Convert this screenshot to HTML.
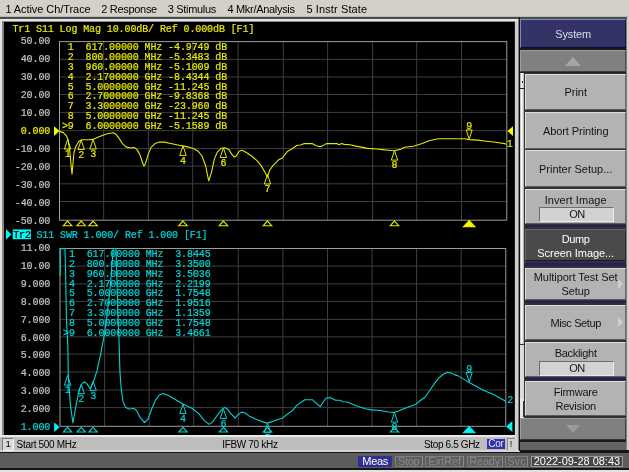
<!DOCTYPE html>
<html><head><meta charset="utf-8"><title>E5071C</title>
<style>
*{margin:0;padding:0;box-sizing:border-box}
html,body{width:629px;height:472px;overflow:hidden;background:#d4d0c8;font-family:"Liberation Sans",sans-serif}
#root{position:relative;width:629px;height:472px;overflow:hidden;background:#d4d0c8;will-change:transform;transform:translateZ(0)}
.abs{position:absolute}
#menu{left:0;top:0;width:629px;height:17px;background:#d4d0c8;font-size:11px;color:#000;white-space:pre}
#menu span{position:absolute;top:2.8px;line-height:13px;letter-spacing:-0.05px}
.k{position:absolute;left:525px;width:101.4px;background:#b3b3b3;border-top:1px solid #dcdcdc;border-left:1px solid #dcdcdc;border-right:1px solid #6a6a6a;border-bottom:1px solid #5a5a5a;font-size:11px;color:#141414;text-align:center;line-height:13px}
.k.dk{background:#4a4a4a;color:#fff;border-color:#6a6a6a #2a2a2a #1a1a1a #6a6a6a}
.k b{font-weight:normal}
.k .one{position:absolute;left:0;right:0;top:50%;margin-top:-5.6px}
.k .two{position:absolute;left:0;right:0;top:50%;margin-top:-13.6px;line-height:14.3px}
.k .t1{position:absolute;left:0;right:0;top:4.2px}
.k .on{position:absolute;left:13.4px;width:75px;height:15px;background:#d2d2d2;border-top:1px solid #6c6c6c;border-left:1px solid #6c6c6c;border-right:1px solid #eaeaea;border-bottom:1px solid #eaeaea;line-height:13.4px;font-size:11px}
.ar{position:absolute;right:2.4px;top:50%;margin-top:-5px;width:0;height:0;border-left:5.4px solid #cfcfcf;border-top:5px solid transparent;border-bottom:5px solid transparent}
.bl{position:absolute;left:525px;width:101.4px;height:2.2px;background:#20205e}
.sb{position:absolute;top:455.6px;height:11.8px;border:1px solid #7e7e7e;border-right-color:#8a8a8a;color:#898989;font-size:11px;line-height:9.4px;text-align:center;background:#5e5e5e;white-space:pre}
</style></head><body><div id="root">
<!-- menu bar -->
<div id="menu" class="abs"><span style="left:5.4px;letter-spacing:-0.07px">1 Active Ch/Trace</span><span style="left:101.2px;letter-spacing:-0.3px">2 Response</span><span style="left:167.8px;letter-spacing:-0.33px">3 Stimulus</span><span style="left:227.4px;letter-spacing:-0.3px">4 Mkr/Analysis</span><span style="left:306.4px;letter-spacing:0.12px">5 Instr State</span></div>
<div class="abs" style="left:0;top:16.4px;width:629px;height:1px;background:#bdbab2"></div>
<div class="abs" style="left:0;top:17.2px;width:629px;height:1.6px;background:#4c4c4c"></div>
<!-- display frame -->
<div class="abs" style="left:0;top:18.8px;width:518.6px;height:418px;background:#e6e6e6"></div>
<div class="abs" style="left:2px;top:20.6px;width:515.2px;height:416px;background:#858585"></div>
<div class="abs" style="left:514.8px;top:20.6px;width:2.8px;height:430px;background:#d0d0d0"></div>
<div class="abs" style="left:517.6px;top:19px;width:1.4px;height:432px;background:#7c7c7c"></div>
<div class="abs" style="left:518.9px;top:17.2px;width:1.1px;height:434px;background:#111"></div>
<svg width="629" height="472" viewBox="0 0 629 472" style="position:absolute;left:0;top:0">
<rect x="4" y="22" width="510.8" height="413.3" fill="#000"/>
<line x1="103.7" y1="41.6" x2="103.7" y2="220.2" stroke="#3e3e3e" stroke-width="1"/>
<line x1="148.4" y1="41.6" x2="148.4" y2="220.2" stroke="#3e3e3e" stroke-width="1"/>
<line x1="192.7" y1="41.6" x2="192.7" y2="220.2" stroke="#3e3e3e" stroke-width="1"/>
<line x1="238.0" y1="41.6" x2="238.0" y2="220.2" stroke="#3e3e3e" stroke-width="1"/>
<line x1="283.3" y1="41.6" x2="283.3" y2="220.2" stroke="#3e3e3e" stroke-width="1"/>
<line x1="327.6" y1="41.6" x2="327.6" y2="220.2" stroke="#3e3e3e" stroke-width="1"/>
<line x1="372.6" y1="41.6" x2="372.6" y2="220.2" stroke="#3e3e3e" stroke-width="1"/>
<line x1="416.7" y1="41.6" x2="416.7" y2="220.2" stroke="#3e3e3e" stroke-width="1"/>
<line x1="461.5" y1="41.6" x2="461.5" y2="220.2" stroke="#3e3e3e" stroke-width="1"/>
<line x1="59.5" y1="59.4" x2="506.8" y2="59.4" stroke="#3e3e3e" stroke-width="1"/>
<line x1="59.5" y1="77.0" x2="506.8" y2="77.0" stroke="#3e3e3e" stroke-width="1"/>
<line x1="59.5" y1="94.5" x2="506.8" y2="94.5" stroke="#3e3e3e" stroke-width="1"/>
<line x1="59.5" y1="112.4" x2="506.8" y2="112.4" stroke="#3e3e3e" stroke-width="1"/>
<line x1="59.5" y1="130.7" x2="506.8" y2="130.7" stroke="#3e3e3e" stroke-width="1"/>
<line x1="59.5" y1="148.5" x2="506.8" y2="148.5" stroke="#3e3e3e" stroke-width="1"/>
<line x1="59.5" y1="166.1" x2="506.8" y2="166.1" stroke="#3e3e3e" stroke-width="1"/>
<line x1="59.5" y1="183.8" x2="506.8" y2="183.8" stroke="#3e3e3e" stroke-width="1"/>
<line x1="59.5" y1="201.5" x2="506.8" y2="201.5" stroke="#3e3e3e" stroke-width="1"/>
<rect x="59.5" y="41.6" width="447.3" height="178.6" fill="none" stroke="#9c9c9c" stroke-width="1"/>
<text x="12.4" y="31.7" fill="#e6e600" stroke="#e6e600" stroke-width="0.22" text-anchor="start" style="font-family:'Liberation Mono',monospace;font-size:10.0px;letter-spacing:-0.101px;white-space:pre;">Tr1 S11 Log Mag 10.00dB/ Ref 0.000dB [F1]</text>
<text x="50.2" y="44.3" fill="#c0c0c0" stroke="#c0c0c0" stroke-width="0.22" text-anchor="end" style="font-family:'Liberation Mono',monospace;font-size:10.0px;letter-spacing:-0.101px;white-space:pre;">50.00</text>
<text x="50.2" y="62.2" fill="#c0c0c0" stroke="#c0c0c0" stroke-width="0.22" text-anchor="end" style="font-family:'Liberation Mono',monospace;font-size:10.0px;letter-spacing:-0.101px;white-space:pre;">40.00</text>
<text x="50.2" y="80.2" fill="#c0c0c0" stroke="#c0c0c0" stroke-width="0.22" text-anchor="end" style="font-family:'Liberation Mono',monospace;font-size:10.0px;letter-spacing:-0.101px;white-space:pre;">30.00</text>
<text x="50.2" y="98.1" fill="#c0c0c0" stroke="#c0c0c0" stroke-width="0.22" text-anchor="end" style="font-family:'Liberation Mono',monospace;font-size:10.0px;letter-spacing:-0.101px;white-space:pre;">20.00</text>
<text x="50.2" y="116.1" fill="#c0c0c0" stroke="#c0c0c0" stroke-width="0.22" text-anchor="end" style="font-family:'Liberation Mono',monospace;font-size:10.0px;letter-spacing:-0.101px;white-space:pre;">10.00</text>
<text x="50.2" y="134.1" fill="#e6e600" stroke="#e6e600" stroke-width="0.22" text-anchor="end" style="font-family:'Liberation Mono',monospace;font-size:10.0px;letter-spacing:-0.101px;white-space:pre;">0.000</text>
<text x="50.2" y="152.0" fill="#c0c0c0" stroke="#c0c0c0" stroke-width="0.22" text-anchor="end" style="font-family:'Liberation Mono',monospace;font-size:10.0px;letter-spacing:-0.101px;white-space:pre;">-10.00</text>
<text x="50.2" y="169.9" fill="#c0c0c0" stroke="#c0c0c0" stroke-width="0.22" text-anchor="end" style="font-family:'Liberation Mono',monospace;font-size:10.0px;letter-spacing:-0.101px;white-space:pre;">-20.00</text>
<text x="50.2" y="187.9" fill="#c0c0c0" stroke="#c0c0c0" stroke-width="0.22" text-anchor="end" style="font-family:'Liberation Mono',monospace;font-size:10.0px;letter-spacing:-0.101px;white-space:pre;">-30.00</text>
<text x="50.2" y="205.8" fill="#c0c0c0" stroke="#c0c0c0" stroke-width="0.22" text-anchor="end" style="font-family:'Liberation Mono',monospace;font-size:10.0px;letter-spacing:-0.101px;white-space:pre;">-40.00</text>
<text x="50.2" y="223.8" fill="#c0c0c0" stroke="#c0c0c0" stroke-width="0.22" text-anchor="end" style="font-family:'Liberation Mono',monospace;font-size:10.0px;letter-spacing:-0.101px;white-space:pre;">-50.00</text>
<text x="61.9" y="50.2" fill="#e6e600" stroke="#e6e600" stroke-width="0.22" text-anchor="start" style="font-family:'Liberation Mono',monospace;font-size:10.0px;letter-spacing:-0.101px;white-space:pre;"> 1  617.00000 MHz -4.9749 dB</text>
<text x="61.9" y="60.0" fill="#e6e600" stroke="#e6e600" stroke-width="0.22" text-anchor="start" style="font-family:'Liberation Mono',monospace;font-size:10.0px;letter-spacing:-0.101px;white-space:pre;"> 2  800.00000 MHz -5.3483 dB</text>
<text x="61.9" y="69.8" fill="#e6e600" stroke="#e6e600" stroke-width="0.22" text-anchor="start" style="font-family:'Liberation Mono',monospace;font-size:10.0px;letter-spacing:-0.101px;white-space:pre;"> 3  960.00000 MHz -5.1009 dB</text>
<text x="61.9" y="79.7" fill="#e6e600" stroke="#e6e600" stroke-width="0.22" text-anchor="start" style="font-family:'Liberation Mono',monospace;font-size:10.0px;letter-spacing:-0.101px;white-space:pre;"> 4  2.1700000 GHz -8.4344 dB</text>
<text x="61.9" y="89.5" fill="#e6e600" stroke="#e6e600" stroke-width="0.22" text-anchor="start" style="font-family:'Liberation Mono',monospace;font-size:10.0px;letter-spacing:-0.101px;white-space:pre;"> 5  5.0000000 GHz -11.245 dB</text>
<text x="61.9" y="99.3" fill="#e6e600" stroke="#e6e600" stroke-width="0.22" text-anchor="start" style="font-family:'Liberation Mono',monospace;font-size:10.0px;letter-spacing:-0.101px;white-space:pre;"> 6  2.7000000 GHz -9.8368 dB</text>
<text x="61.9" y="109.1" fill="#e6e600" stroke="#e6e600" stroke-width="0.22" text-anchor="start" style="font-family:'Liberation Mono',monospace;font-size:10.0px;letter-spacing:-0.101px;white-space:pre;"> 7  3.3000000 GHz -23.960 dB</text>
<text x="61.9" y="118.9" fill="#e6e600" stroke="#e6e600" stroke-width="0.22" text-anchor="start" style="font-family:'Liberation Mono',monospace;font-size:10.0px;letter-spacing:-0.101px;white-space:pre;"> 8  5.0000000 GHz -11.245 dB</text>
<text x="61.9" y="128.8" fill="#e6e600" stroke="#e6e600" stroke-width="0.22" text-anchor="start" style="font-family:'Liberation Mono',monospace;font-size:10.0px;letter-spacing:-0.101px;white-space:pre;">&gt;9  6.0000000 GHz -5.1589 dB</text>
<polyline points="59.5,131.4 63.4,132.6 66.2,135.6 68.1,139.8 70.0,153.2 71.0,164.6 72.0,174.2 72.9,164.6 73.9,153.2 75.8,146.5 78.6,141.7 81.5,139.8 88.2,139.8 93.0,139.4 99.6,136.4 107.3,133.7 113.0,132.7 115.8,134.1 118.7,137.9 122.5,143.6 126.3,147.1 131.1,148.0 134.0,147.4 136.8,149.4 139.7,154.1 142.6,162.7 143.9,166.1 145.4,163.7 148.3,154.1 151.1,147.4 155.0,143.6 159.7,142.1 164.5,142.1 169.5,143.2 179.1,145.2 182.9,145.9 188.6,147.1 194.4,149.0 198.2,151.3 202.0,156.0 205.8,166.5 208.7,180.8 211.5,172.3 214.4,158.9 217.3,152.2 221.1,148.4 224.9,147.8 228.7,149.4 231.6,154.1 234.4,157.0 236.3,156.0 239.2,151.3 242.1,150.3 245.9,152.2 251.6,156.0 257.3,160.8 261.1,165.6 265.0,172.3 267.3,177.0 269.7,170.3 272.9,165.6 278.6,159.8 282.4,157.9 287.2,151.6 291.9,149.0 296.7,145.5 300.5,145.0 304.4,143.6 312.0,143.6 315.8,145.5 319.6,146.7 322.5,145.9 326.3,143.6 336.8,143.6 339.1,144.8 341.6,143.6 344.4,144.4 350.2,144.8 355.9,146.1 361.6,147.1 367.3,148.4 376.9,149.0 384.5,149.9 388.9,150.3 394.5,150.7 400.0,149.4 404.5,147.2 413.4,146.3 422.3,143.4 429.0,140.7 437.9,138.7 446.8,138.7 464.6,138.7 469.0,139.6 477.9,140.1 486.8,141.2 495.7,142.3 504.6,143.6 506.8,144.4" fill="none" stroke="#e6e600" stroke-width="1.1" stroke-linejoin="round"/>
<path d="M67.6 139.6 L64.4 149.1 L70.8 149.1 Z" fill="none" stroke="#e6e600" stroke-width="1"/><text x="67.6" y="157.3" fill="#e6e600" stroke="#e6e600" stroke-width="0.22" text-anchor="middle" style="font-family:'Liberation Mono',monospace;font-size:10.0px;letter-spacing:-0.101px;white-space:pre;">1</text>
<path d="M81.2 140.0 L78.0 149.5 L84.4 149.5 Z" fill="none" stroke="#e6e600" stroke-width="1"/><text x="81.2" y="157.7" fill="#e6e600" stroke="#e6e600" stroke-width="0.22" text-anchor="middle" style="font-family:'Liberation Mono',monospace;font-size:10.0px;letter-spacing:-0.101px;white-space:pre;">2</text>
<path d="M93.1 139.5 L89.9 149.0 L96.3 149.0 Z" fill="none" stroke="#e6e600" stroke-width="1"/><text x="93.1" y="157.2" fill="#e6e600" stroke="#e6e600" stroke-width="0.22" text-anchor="middle" style="font-family:'Liberation Mono',monospace;font-size:10.0px;letter-spacing:-0.101px;white-space:pre;">3</text>
<path d="M183.0 145.9 L179.8 155.4 L186.2 155.4 Z" fill="none" stroke="#e6e600" stroke-width="1"/><text x="183.0" y="163.6" fill="#e6e600" stroke="#e6e600" stroke-width="0.22" text-anchor="middle" style="font-family:'Liberation Mono',monospace;font-size:10.0px;letter-spacing:-0.101px;white-space:pre;">4</text>
<path d="M223.4 148.0 L220.2 157.5 L226.6 157.5 Z" fill="none" stroke="#e6e600" stroke-width="1"/><text x="223.4" y="165.7" fill="#e6e600" stroke="#e6e600" stroke-width="0.22" text-anchor="middle" style="font-family:'Liberation Mono',monospace;font-size:10.0px;letter-spacing:-0.101px;white-space:pre;">6</text>
<path d="M267.5 174.5 L264.3 184.0 L270.7 184.0 Z" fill="none" stroke="#e6e600" stroke-width="1"/><text x="267.5" y="192.2" fill="#e6e600" stroke="#e6e600" stroke-width="0.22" text-anchor="middle" style="font-family:'Liberation Mono',monospace;font-size:10.0px;letter-spacing:-0.101px;white-space:pre;">7</text>
<path d="M394.5 150.6 L391.3 160.1 L397.7 160.1 Z" fill="none" stroke="#e6e600" stroke-width="1"/><text x="394.5" y="168.3" fill="#e6e600" stroke="#e6e600" stroke-width="0.22" text-anchor="middle" style="font-family:'Liberation Mono',monospace;font-size:10.0px;letter-spacing:-0.101px;white-space:pre;">8</text>
<path d="M469.2 139.2 L466.2 129.9 L472.2 129.9 Z" fill="none" stroke="#e6e600" stroke-width="1"/><text x="469.2" y="129.0" fill="#e6e600" stroke="#e6e600" stroke-width="0.22" text-anchor="middle" style="font-family:'Liberation Mono',monospace;font-size:10.0px;letter-spacing:-0.101px;white-space:pre;">9</text>
<path d="M54 126.3 L59.6 131.1 L54 135.9 Z" fill="#fafa00"/>
<path d="M513 126.3 L507.4 131.1 L513 135.9 Z" fill="#fafa00"/>
<text x="506.8" y="146.8" fill="#e6e600" stroke="#e6e600" stroke-width="0.22" text-anchor="start" style="font-family:'Liberation Mono',monospace;font-size:10.0px;letter-spacing:-0.101px;white-space:pre;">1</text>
<path d="M67.6 221.0 L63.4 225.7 L71.8 225.7 Z" fill="none" stroke="#e6e600" stroke-width="1.15"/>
<path d="M81.2 221.0 L77.0 225.7 L85.4 225.7 Z" fill="none" stroke="#e6e600" stroke-width="1.15"/>
<path d="M93.1 221.0 L88.9 225.7 L97.3 225.7 Z" fill="none" stroke="#e6e600" stroke-width="1.15"/>
<path d="M183.0 221.0 L178.8 225.7 L187.2 225.7 Z" fill="none" stroke="#e6e600" stroke-width="1.15"/>
<path d="M223.4 221.0 L219.2 225.7 L227.6 225.7 Z" fill="none" stroke="#e6e600" stroke-width="1.15"/>
<path d="M267.5 221.0 L263.3 225.7 L271.7 225.7 Z" fill="none" stroke="#e6e600" stroke-width="1.15"/>
<path d="M394.5 221.0 L390.3 225.7 L398.7 225.7 Z" fill="none" stroke="#e6e600" stroke-width="1.15"/>
<path d="M469.2 220.7 L463.6 226.7 L474.8 226.7 Z" fill="#fafa00" stroke="#fafa00" stroke-width="1.15"/>
<line x1="104.6" y1="248.5" x2="104.6" y2="426.3" stroke="#3e3e3e" stroke-width="1"/>
<line x1="149.2" y1="248.5" x2="149.2" y2="426.3" stroke="#3e3e3e" stroke-width="1"/>
<line x1="193.7" y1="248.5" x2="193.7" y2="426.3" stroke="#3e3e3e" stroke-width="1"/>
<line x1="238.3" y1="248.5" x2="238.3" y2="426.3" stroke="#3e3e3e" stroke-width="1"/>
<line x1="282.9" y1="248.5" x2="282.9" y2="426.3" stroke="#3e3e3e" stroke-width="1"/>
<line x1="327.5" y1="248.5" x2="327.5" y2="426.3" stroke="#3e3e3e" stroke-width="1"/>
<line x1="372.1" y1="248.5" x2="372.1" y2="426.3" stroke="#3e3e3e" stroke-width="1"/>
<line x1="416.6" y1="248.5" x2="416.6" y2="426.3" stroke="#3e3e3e" stroke-width="1"/>
<line x1="461.2" y1="248.5" x2="461.2" y2="426.3" stroke="#3e3e3e" stroke-width="1"/>
<line x1="60.0" y1="266.1" x2="505.8" y2="266.1" stroke="#3e3e3e" stroke-width="1"/>
<line x1="60.0" y1="283.9" x2="505.8" y2="283.9" stroke="#3e3e3e" stroke-width="1"/>
<line x1="60.0" y1="301.4" x2="505.8" y2="301.4" stroke="#3e3e3e" stroke-width="1"/>
<line x1="60.0" y1="319.4" x2="505.8" y2="319.4" stroke="#3e3e3e" stroke-width="1"/>
<line x1="60.0" y1="336.9" x2="505.8" y2="336.9" stroke="#3e3e3e" stroke-width="1"/>
<line x1="60.0" y1="354.1" x2="505.8" y2="354.1" stroke="#3e3e3e" stroke-width="1"/>
<line x1="60.0" y1="372.0" x2="505.8" y2="372.0" stroke="#3e3e3e" stroke-width="1"/>
<line x1="60.0" y1="390.0" x2="505.8" y2="390.0" stroke="#3e3e3e" stroke-width="1"/>
<line x1="60.0" y1="407.6" x2="505.8" y2="407.6" stroke="#3e3e3e" stroke-width="1"/>
<rect x="60.0" y="248.5" width="445.8" height="177.8" fill="none" stroke="#9c9c9c" stroke-width="1"/>
<path d="M6 229.0 L11.4 234.4 L6 239.8 Z" fill="#00f8f8"/>
<rect x="12.7" y="229.4" width="18.2" height="9.8" fill="#00f8f8"/>
<text x="13.2" y="237.8" fill="#000" stroke="#000" stroke-width="0.22" text-anchor="start" style="font-family:'Liberation Mono',monospace;font-size:10.0px;letter-spacing:-0.101px;white-space:pre;">Tr2</text>
<text x="36.4" y="237.7" fill="#00d4d4" stroke="#00d4d4" stroke-width="0.22" text-anchor="start" style="font-family:'Liberation Mono',monospace;font-size:10.0px;letter-spacing:-0.101px;white-space:pre;">S11 SWR 1.000/ Ref 1.000 [F1]</text>
<text x="50.2" y="251.0" fill="#c0c0c0" stroke="#c0c0c0" stroke-width="0.22" text-anchor="end" style="font-family:'Liberation Mono',monospace;font-size:10.0px;letter-spacing:-0.101px;white-space:pre;">11.00</text>
<text x="50.2" y="268.9" fill="#c0c0c0" stroke="#c0c0c0" stroke-width="0.22" text-anchor="end" style="font-family:'Liberation Mono',monospace;font-size:10.0px;letter-spacing:-0.101px;white-space:pre;">10.00</text>
<text x="50.2" y="286.8" fill="#c0c0c0" stroke="#c0c0c0" stroke-width="0.22" text-anchor="end" style="font-family:'Liberation Mono',monospace;font-size:10.0px;letter-spacing:-0.101px;white-space:pre;">9.000</text>
<text x="50.2" y="304.7" fill="#c0c0c0" stroke="#c0c0c0" stroke-width="0.22" text-anchor="end" style="font-family:'Liberation Mono',monospace;font-size:10.0px;letter-spacing:-0.101px;white-space:pre;">8.000</text>
<text x="50.2" y="322.6" fill="#c0c0c0" stroke="#c0c0c0" stroke-width="0.22" text-anchor="end" style="font-family:'Liberation Mono',monospace;font-size:10.0px;letter-spacing:-0.101px;white-space:pre;">7.000</text>
<text x="50.2" y="340.5" fill="#c0c0c0" stroke="#c0c0c0" stroke-width="0.22" text-anchor="end" style="font-family:'Liberation Mono',monospace;font-size:10.0px;letter-spacing:-0.101px;white-space:pre;">6.000</text>
<text x="50.2" y="358.4" fill="#c0c0c0" stroke="#c0c0c0" stroke-width="0.22" text-anchor="end" style="font-family:'Liberation Mono',monospace;font-size:10.0px;letter-spacing:-0.101px;white-space:pre;">5.000</text>
<text x="50.2" y="376.3" fill="#c0c0c0" stroke="#c0c0c0" stroke-width="0.22" text-anchor="end" style="font-family:'Liberation Mono',monospace;font-size:10.0px;letter-spacing:-0.101px;white-space:pre;">4.000</text>
<text x="50.2" y="394.2" fill="#c0c0c0" stroke="#c0c0c0" stroke-width="0.22" text-anchor="end" style="font-family:'Liberation Mono',monospace;font-size:10.0px;letter-spacing:-0.101px;white-space:pre;">3.000</text>
<text x="50.2" y="412.1" fill="#c0c0c0" stroke="#c0c0c0" stroke-width="0.22" text-anchor="end" style="font-family:'Liberation Mono',monospace;font-size:10.0px;letter-spacing:-0.101px;white-space:pre;">2.000</text>
<text x="50.2" y="430.0" fill="#00d4d4" stroke="#00d4d4" stroke-width="0.22" text-anchor="end" style="font-family:'Liberation Mono',monospace;font-size:10.0px;letter-spacing:-0.101px;white-space:pre;">1.000</text>
<text x="63.1" y="257.1" fill="#00d4d4" stroke="#00d4d4" stroke-width="0.22" text-anchor="start" style="font-family:'Liberation Mono',monospace;font-size:10.0px;letter-spacing:-0.101px;white-space:pre;"> 1  617.00000 MHz  3.8445</text>
<text x="63.1" y="266.9" fill="#00d4d4" stroke="#00d4d4" stroke-width="0.22" text-anchor="start" style="font-family:'Liberation Mono',monospace;font-size:10.0px;letter-spacing:-0.101px;white-space:pre;"> 2  800.00000 MHz  3.3500</text>
<text x="63.1" y="276.7" fill="#00d4d4" stroke="#00d4d4" stroke-width="0.22" text-anchor="start" style="font-family:'Liberation Mono',monospace;font-size:10.0px;letter-spacing:-0.101px;white-space:pre;"> 3  960.00000 MHz  3.5036</text>
<text x="63.1" y="286.6" fill="#00d4d4" stroke="#00d4d4" stroke-width="0.22" text-anchor="start" style="font-family:'Liberation Mono',monospace;font-size:10.0px;letter-spacing:-0.101px;white-space:pre;"> 4  2.1700000 GHz  2.2199</text>
<text x="63.1" y="296.4" fill="#00d4d4" stroke="#00d4d4" stroke-width="0.22" text-anchor="start" style="font-family:'Liberation Mono',monospace;font-size:10.0px;letter-spacing:-0.101px;white-space:pre;"> 5  5.0000000 GHz  1.7548</text>
<text x="63.1" y="306.2" fill="#00d4d4" stroke="#00d4d4" stroke-width="0.22" text-anchor="start" style="font-family:'Liberation Mono',monospace;font-size:10.0px;letter-spacing:-0.101px;white-space:pre;"> 6  2.7000000 GHz  1.9516</text>
<text x="63.1" y="316.0" fill="#00d4d4" stroke="#00d4d4" stroke-width="0.22" text-anchor="start" style="font-family:'Liberation Mono',monospace;font-size:10.0px;letter-spacing:-0.101px;white-space:pre;"> 7  3.3000000 GHz  1.1359</text>
<text x="63.1" y="325.8" fill="#00d4d4" stroke="#00d4d4" stroke-width="0.22" text-anchor="start" style="font-family:'Liberation Mono',monospace;font-size:10.0px;letter-spacing:-0.101px;white-space:pre;"> 8  5.0000000 GHz  1.7548</text>
<text x="63.1" y="335.7" fill="#00d4d4" stroke="#00d4d4" stroke-width="0.22" text-anchor="start" style="font-family:'Liberation Mono',monospace;font-size:10.0px;letter-spacing:-0.101px;white-space:pre;">&gt;9  6.0000000 GHz  3.4661</text>
<polyline points="60.2,276.0 60.2,248.6 65.0,248.6 65.6,274.4 66.5,320.0 67.8,345.4 68.3,375.9 70.3,403.9 72.9,423.0 75.4,409.0 79.2,389.9 81.8,384.1 84.3,381.8 86.9,383.6 90.2,388.7 92.0,384.8 93.7,381.0 97.0,370.9 100.9,353.1 104.7,332.7 106.4,320.0 110.0,290.0 113.0,251.5 113.3,248.5 116.0,248.5 116.8,278.2 118.1,320.0 119.2,345.4 119.9,370.9 121.2,388.7 123.0,401.4 125.5,407.2 128.8,409.0 133.9,408.5 136.4,410.3 140.3,417.9 144.6,422.5 147.9,419.2 151.7,409.0 155.5,400.1 159.3,395.0 163.2,393.6 168.5,395.5 177.0,400.4 183.3,404.2 191.8,408.3 198.2,413.1 204.5,420.6 209.2,424.4 213.0,421.6 218.3,413.8 222.5,408.9 224.7,407.4 227.4,408.9 231.0,413.8 235.3,418.0 238.4,414.2 241.6,412.1 244.8,412.7 249.0,415.9 255.4,418.9 261.8,421.6 267.1,423.1 272.4,421.6 276.4,420.0 282.7,417.9 286.9,414.5 292.2,410.9 296.5,405.6 300.7,402.5 304.9,399.7 312.3,399.7 316.6,403.5 320.2,406.7 322.9,402.5 326.1,398.2 330.3,397.6 335.6,400.3 339.9,400.3 343.0,401.8 347.3,402.0 352.6,404.2 358.9,406.7 365.3,408.8 371.6,409.9 380.1,410.5 388.6,412.0 394.2,412.4 398.5,410.9 403.8,408.8 409.1,406.7 415.4,404.6 420.7,400.3 424.9,397.2 430.2,389.8 434.5,383.4 438.7,378.1 442.9,374.5 447.2,372.4 451.4,373.0 454.6,374.9 457.8,375.6 462.0,378.1 468.3,381.9 474.7,385.5 481.0,389.1 487.4,391.9 493.7,394.6 500.1,398.2 505.8,401.2" fill="none" stroke="#00d4d4" stroke-width="1.1" stroke-linejoin="round"/>
<path d="M67.6 375.6 L64.4 385.1 L70.8 385.1 Z" fill="none" stroke="#00d4d4" stroke-width="1"/><text x="67.6" y="393.3" fill="#00d4d4" stroke="#00d4d4" stroke-width="0.22" text-anchor="middle" style="font-family:'Liberation Mono',monospace;font-size:10.0px;letter-spacing:-0.101px;white-space:pre;">1</text>
<path d="M81.2 384.2 L78.0 393.7 L84.4 393.7 Z" fill="none" stroke="#00d4d4" stroke-width="1"/><text x="81.2" y="401.9" fill="#00d4d4" stroke="#00d4d4" stroke-width="0.22" text-anchor="middle" style="font-family:'Liberation Mono',monospace;font-size:10.0px;letter-spacing:-0.101px;white-space:pre;">2</text>
<path d="M93.1 381.2 L89.9 390.7 L96.3 390.7 Z" fill="none" stroke="#00d4d4" stroke-width="1"/><text x="93.1" y="398.9" fill="#00d4d4" stroke="#00d4d4" stroke-width="0.22" text-anchor="middle" style="font-family:'Liberation Mono',monospace;font-size:10.0px;letter-spacing:-0.101px;white-space:pre;">3</text>
<path d="M183.0 404.2 L179.8 413.7 L186.2 413.7 Z" fill="none" stroke="#00d4d4" stroke-width="1"/><text x="183.0" y="421.9" fill="#00d4d4" stroke="#00d4d4" stroke-width="0.22" text-anchor="middle" style="font-family:'Liberation Mono',monospace;font-size:10.0px;letter-spacing:-0.101px;white-space:pre;">4</text>
<path d="M223.4 408.9 L220.2 418.4 L226.6 418.4 Z" fill="none" stroke="#00d4d4" stroke-width="1"/><text x="223.4" y="426.6" fill="#00d4d4" stroke="#00d4d4" stroke-width="0.22" text-anchor="middle" style="font-family:'Liberation Mono',monospace;font-size:10.0px;letter-spacing:-0.101px;white-space:pre;">6</text>
<path d="M267.5 423.2 L264.3 432.7 L270.7 432.7 Z" fill="none" stroke="#00d4d4" stroke-width="1"/><text x="267.5" y="440.9" fill="#00d4d4" stroke="#00d4d4" stroke-width="0.22" text-anchor="middle" style="font-family:'Liberation Mono',monospace;font-size:10.0px;letter-spacing:-0.101px;white-space:pre;">7</text>
<path d="M394.5 412.6 L391.3 422.1 L397.7 422.1 Z" fill="none" stroke="#00d4d4" stroke-width="1"/><text x="394.5" y="430.3" fill="#00d4d4" stroke="#00d4d4" stroke-width="0.22" text-anchor="middle" style="font-family:'Liberation Mono',monospace;font-size:10.0px;letter-spacing:-0.101px;white-space:pre;">8</text>
<path d="M469.2 381.7 L466.2 372.4 L472.2 372.4 Z" fill="none" stroke="#00d4d4" stroke-width="1"/><text x="469.2" y="371.5" fill="#00d4d4" stroke="#00d4d4" stroke-width="0.22" text-anchor="middle" style="font-family:'Liberation Mono',monospace;font-size:10.0px;letter-spacing:-0.101px;white-space:pre;">9</text>
<path d="M54.2 422.3 L59.6 427.2 L54.2 432.1 Z" fill="#00f8f8"/>
<path d="M512.4 420.9 L506.2 426.5 L512.4 432.1 Z" fill="#00f8f8"/>
<text x="507.2" y="403.2" fill="#00d4d4" stroke="#00d4d4" stroke-width="0.22" text-anchor="start" style="font-family:'Liberation Mono',monospace;font-size:10.0px;letter-spacing:-0.101px;white-space:pre;">2</text>
<path d="M67.6 427.3 L63.4 432.0 L71.8 432.0 Z" fill="none" stroke="#00d4d4" stroke-width="1.15"/>
<path d="M81.2 427.3 L77.0 432.0 L85.4 432.0 Z" fill="none" stroke="#00d4d4" stroke-width="1.15"/>
<path d="M93.1 427.3 L88.9 432.0 L97.3 432.0 Z" fill="none" stroke="#00d4d4" stroke-width="1.15"/>
<path d="M183.0 427.3 L178.8 432.0 L187.2 432.0 Z" fill="none" stroke="#00d4d4" stroke-width="1.15"/>
<path d="M223.4 427.3 L219.2 432.0 L227.6 432.0 Z" fill="none" stroke="#00d4d4" stroke-width="1.15"/>
<path d="M267.5 427.3 L263.3 432.0 L271.7 432.0 Z" fill="none" stroke="#00d4d4" stroke-width="1.15"/>
<path d="M394.5 427.3 L390.3 432.0 L398.7 432.0 Z" fill="none" stroke="#00d4d4" stroke-width="1.15"/>
<path d="M469.2 426.7 L463.6 432.7 L474.8 432.7 Z" fill="#00f8f8" stroke="#00f8f8" stroke-width="1.15"/>
</svg>
<!-- channel status bar -->
<div class="abs" style="left:0;top:435.3px;width:514.8px;height:1.7px;background:#e8e8e8"></div>
<div class="abs" style="left:0;top:437px;width:514.8px;height:13.4px;background:#bebebe"></div><div class="abs" style="left:0;top:450.4px;width:519px;height:1.2px;background:#d4d4d4"></div>

<div class="abs" style="left:2px;top:438px;width:12.4px;height:12.6px;background:#dadada;border-top:1px solid #777;border-left:1px solid #777;border-right:1px solid #f4f4f4;border-bottom:1px solid #f4f4f4;font-size:9.6px;line-height:10.6px;text-align:center;color:#000">1</div>
<div class="abs" style="left:16.6px;top:439.1px;font-size:10px;letter-spacing:-0.32px;line-height:12px;color:#000;white-space:pre">Start 500 MHz</div>
<div class="abs" style="left:222.2px;top:439.1px;font-size:10px;letter-spacing:-0.32px;line-height:12px;color:#000;white-space:pre">IFBW 70 kHz</div>
<div class="abs" style="left:424px;top:439.1px;font-size:10px;letter-spacing:-0.36px;line-height:12px;color:#000;white-space:pre">Stop 6.5 GHz</div>
<div class="abs" style="left:486.7px;top:438.6px;width:18.5px;height:10.5px;background:#3434a4;color:#e4e4ff;font-size:10px;letter-spacing:-0.3px;line-height:10.8px;text-align:center">Cor</div>
<div class="abs" style="left:506.6px;top:438px;width:8px;height:11.6px;background:#cfcfcf;border-left:1px solid #8c8c8c;border-top:1px solid #8c8c8c;color:#222;font-size:9.6px;line-height:10px;text-align:center">!</div>
<!-- bottom status bar -->
<div class="abs" style="left:0;top:451.6px;width:629px;height:1.3px;background:#161616"></div>
<div class="abs" style="left:0;top:452.8px;width:629px;height:15.4px;background:#5c5c5c"></div>
<div class="abs" style="left:0;top:468px;width:629px;height:1.6px;background:#161616"></div>
<div class="abs" style="left:0;top:469.6px;width:629px;height:2.4px;background:#e2e2e2"></div>
<div class="sb" style="left:358.4px;width:33.6px;background:#2f2f94;color:#fff;border-color:#2f2f94;letter-spacing:-0.3px">Meas</div>
<div class="sb" style="left:394.6px;width:28.2px;letter-spacing:-0.3px">Stop</div>
<div class="sb" style="left:425.2px;width:39px;letter-spacing:-0.03px">ExtRef</div>
<div class="sb" style="left:466.6px;width:36.2px;letter-spacing:-0.2px">Ready</div>
<div class="sb" style="left:505.4px;width:22.2px;letter-spacing:0.1px">Svc</div>
<div class="sb" style="left:531px;width:91.8px;background:#454545;color:#fff;border-color:#9a9a9a;letter-spacing:-0.03px">2022-09-28 08:43</div>
<!-- softkey panel -->
<div class="abs" style="left:520px;top:18.8px;width:109px;height:433px;background:#7e7e7e"></div>
<div class="abs" style="left:626.6px;top:17.2px;width:2.4px;height:435px;background:#d4d0c8"></div>
<div class="abs" style="left:520px;top:19px;width:106.4px;height:29.2px;background:#333366;border-top:1.4px solid #8484c4;border-left:1.4px solid #8484c4;border-bottom:1.6px solid #0c0c30;border-right:1px solid #1a1a44;color:#dcdcec;font-size:11px;line-height:28.6px;letter-spacing:-0.13px;text-align:center">System</div>
<div class="abs" style="left:520px;top:48.2px;width:106.4px;height:2px;background:#1a1a1a"></div>
<div class="abs" style="left:520px;top:50.2px;width:106.4px;height:21.8px;background:#808080;border-top:1px solid #9c9c9c;border-left:1px solid #9c9c9c;border-bottom:1.4px solid #3a3a3a;border-right:1px solid #4a4a4a"></div>
<div class="abs" style="left:564.8px;top:56.6px;width:0;height:0;border-bottom:9.4px solid #a6a6a6;border-left:8.8px solid transparent;border-right:8.8px solid transparent"></div>
<div class="abs" style="left:520px;top:72px;width:106.4px;height:2px;background:#222"></div>
<!-- scroll strip -->
<div class="abs" style="left:520px;top:73.2px;width:5px;height:345px;background:#1a1a1a"></div><div class="abs" style="left:520px;top:74px;width:4.3px;height:344px;background:linear-gradient(to right,#a8a8a8 0,#fff 30%,#e4e2dc 65%,#a4a4a4 100%)"></div>
<div class="abs" style="left:520px;top:73.4px;width:4.3px;height:14.6px;background:linear-gradient(to right,#9a9a9a 0,#f4f2ec 35%,#ebe8e0 70%,#b0b0b0 100%)"></div><div class="abs" style="left:521.9px;top:81.4px;width:1px;height:1.2px;background:#333"></div><div class="abs" style="left:520px;top:87.6px;width:4.3px;height:1.2px;background:#222"></div>

<div class="abs" style="left:520px;top:344.2px;width:4.3px;height:1.2px;background:#333"></div>
<div class="abs" style="left:520px;top:345.4px;width:4.3px;height:54px;background:#dcdcdc"></div>
<div class="abs" style="left:520px;top:399.4px;width:4.3px;height:18.6px;background:#ebe8e0"></div>
<div class="abs" style="left:523px;top:401px;width:1.2px;height:16px;background:#333"></div>
<div class="abs" style="left:524.4px;top:73.2px;width:102px;height:345px;background:#333"></div>
<div class="k" style="top:73.6px;height:36.6px"><span class="one"><b style="letter-spacing:0px">Print</b></span></div>
<div class="k" style="top:112.2px;height:36.4px"><span class="one"><b style="letter-spacing:-0.08px">Abort Printing</b></span></div>
<div class="k" style="top:150.2px;height:36.4px"><span class="one"><b style="letter-spacing:0.0px">Printer Setup...</b></span></div>
<div class="k" style="top:188.6px;height:35px"><span class="t1"><b style="letter-spacing:0.08px">Invert Image</b></span><span class="on" style="top:17.6px"><b style="letter-spacing:-0.5px">ON</b></span></div>
<div class="k dk" style="top:229.4px;height:31.6px"><span class="two"><b style="letter-spacing:-0.4px">Dump</b><br><b style="letter-spacing:-0.06px">Screen Image...</b></span></div>
<div class="k" style="top:267.6px;height:32.4px"><span class="two"><b style="letter-spacing:-0.05px">Multiport Test Set</b><br><b style="letter-spacing:-0.1px">Setup</b></span><i class="ar"></i></div>
<div class="k" style="top:304.8px;height:34.8px"><span class="one"><b style="letter-spacing:-0.38px">Misc Setup</b></span><i class="ar"></i></div>
<div class="k" style="top:342.2px;height:34.8px"><span class="t1"><b style="letter-spacing:-0.29px">Backlight</b></span><span class="on" style="top:17.6px"><b style="letter-spacing:-0.5px">ON</b></span></div>
<div class="k" style="top:381.4px;height:34.6px"><span class="two"><b style="letter-spacing:-0.26px">Firmware</b><br><b style="letter-spacing:-0.21px">Revision</b></span></div>
<div class="bl" style="top:225.2px"></div>
<div class="bl" style="top:263.4px"></div>
<div class="bl" style="top:301.2px"></div>
<div class="bl" style="top:378.2px"></div>
<!-- down arrow button -->
<div class="abs" style="left:520px;top:418.2px;width:106.4px;height:22.2px;background:#808080;border-top:1px solid #9c9c9c;border-left:1px solid #9c9c9c;border-bottom:1.4px solid #333;border-right:1px solid #444"></div>
<div class="abs" style="left:566.4px;top:425px;width:0;height:0;border-top:8px solid #999;border-left:7.8px solid transparent;border-right:7.8px solid transparent"></div>
<div class="abs" style="left:520px;top:440.4px;width:106.4px;height:1.8px;background:#1c1c1c"></div>
<div class="abs" style="left:520px;top:442px;width:106.4px;height:8.4px;background:#646464"></div>
<div class="abs" style="left:520px;top:450.4px;width:109px;height:1.4px;background:#161616"></div>
</div></body></html>
